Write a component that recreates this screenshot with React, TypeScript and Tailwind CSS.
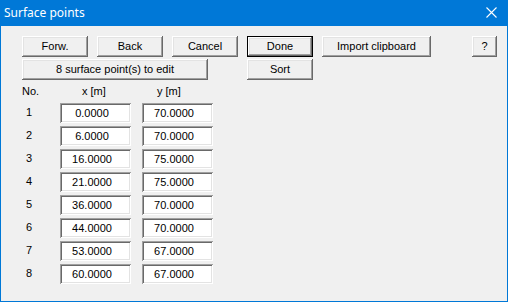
import React from "react";

const btn =
  "h-[21px] bg-[#f0f0f0] text-[11px] leading-[13px] text-black flex items-center justify-center shadow-[inset_-1px_-1px_0_#696969,inset_1px_1px_0_#ffffff,inset_-2px_-2px_0_#a0a0a0,inset_2px_2px_0_#e3e3e3]";
const btnDefault =
  "h-[21px] bg-[#f0f0f0] text-[11px] leading-[13px] text-black flex items-center justify-center shadow-[inset_0_0_0_1px_#000000,inset_-2px_-2px_0_#696969,inset_2px_2px_0_#ffffff,inset_-3px_-3px_0_#a0a0a0,inset_3px_3px_0_#e3e3e3]";
const field =
  "h-[20px] w-[71px] bg-white text-[11px] leading-[13px] text-black flex items-center justify-center pr-[7px] shadow-[inset_1px_1px_0_#a0a0a0,inset_-1px_-1px_0_#ffffff,inset_2px_2px_0_#696969,inset_-2px_-2px_0_#e3e3e3]";

const rows: [string, string, string][] = [
  ["1", "0.0000", "70.0000"],
  ["2", "6.0000", "70.0000"],
  ["3", "16.0000", "75.0000"],
  ["4", "21.0000", "75.0000"],
  ["5", "36.0000", "70.0000"],
  ["6", "44.0000", "70.0000"],
  ["7", "53.0000", "67.0000"],
  ["8", "60.0000", "67.0000"],
];

export default function App() {
  return (
    <div className="w-[508px] h-[302px] bg-[#0078d7] px-[1px] pb-[1px] flex flex-col [font-family:'Liberation_Sans',Arial,sans-serif]">
      <div className="h-[26px] flex items-center justify-between pl-[3px] pr-[10px]">
        <span className="text-white text-[12px] [font-family:'Noto_Sans',sans-serif] leading-[16px] pb-[1px]">
          Surface points
        </span>
        <svg width="11" height="11" viewBox="0 0 11 11" className="mb-[1px]">
          <path d="M0.5 0.5 L10.5 10.5 M10.5 0.5 L0.5 10.5" stroke="#ffffff" strokeWidth="1.1" />
        </svg>
      </div>
      <div className="flex-1 bg-[#f0f0f0] pl-[21px] pt-[10px] flex flex-col">
        <div className="flex items-center">
          <div className={`${btn} w-[66px]`}>Forw.</div>
          <div className={`${btn} w-[66px] ml-[9px]`}>Back</div>
          <div className={`${btn} w-[66px] ml-[9px]`}>Cancel</div>
          <div className={`${btnDefault} w-[66px] ml-[9px]`}>Done</div>
          <div className={`${btn} w-[109px] ml-[9px]`}>Import clipboard</div>
          <div className={`${btn} w-[25px] ml-[41px]`}>?</div>
        </div>
        <div className="flex items-center mt-[2px]">
          <div className={`${btn} w-[186px]`}>8 surface point(s) to edit</div>
          <div className={`${btn} w-[66px] ml-[39px]`}>Sort</div>
        </div>
        <div className="flex text-[11px] leading-[13px] text-black mt-[5px]">
          <span className="w-[60px]">No.</span>
          <span className="w-[75px]">x [m]</span>
          <span>y [m]</span>
        </div>
        <div className="flex flex-col gap-[3px] mt-[5px]">
          {rows.map(([n, x, y]) => (
            <div key={n} className="flex items-center">
              <span className="w-[38px] pl-[4px] text-[11px] leading-[13px] text-black mb-[2px]">{n}</span>
              <div className={field}>{x}</div>
              <div className={`${field} ml-[11px]`}>{y}</div>
            </div>
          ))}
        </div>
      </div>
    </div>
  );
}
